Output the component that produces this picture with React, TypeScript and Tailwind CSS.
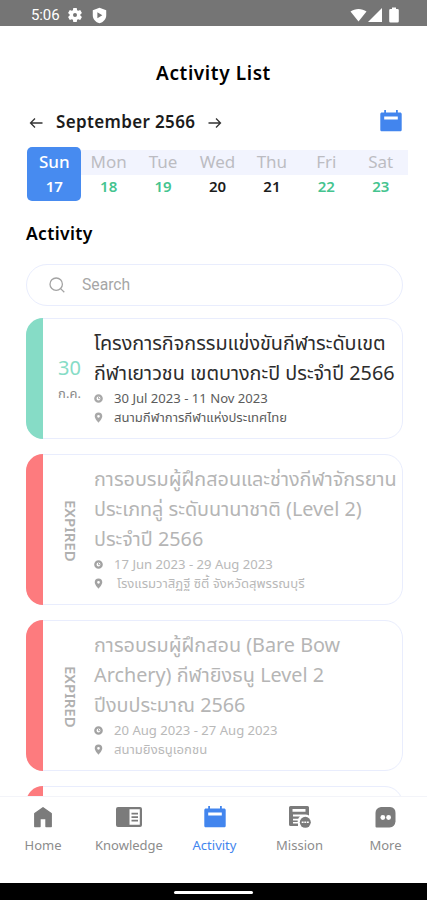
import type { ReactNode } from "react"

type Activity = {
  title: string[]
  date: string
  place: string
  placeStyle?: string
  height: string
  expired?: boolean
}

const days = [
  { name: "Sun", date: "17", color: "text-white" },
  { name: "Mon", date: "18", color: "text-[#45c48f]" },
  { name: "Tue", date: "19", color: "text-[#45c48f]" },
  { name: "Wed", date: "20", color: "text-[#1c1c1c]" },
  { name: "Thu", date: "21", color: "text-[#1c1c1c]" },
  { name: "Fri", date: "22", color: "text-[#45c48f]" },
  { name: "Sat", date: "23", color: "text-[#45c48f]" },
]

const activities: Activity[] = [
  {
    title: ["โครงการกิจกรรมแข่งขันกีฬาระดับเขต", "กีฬาเยาวชน เขตบางกะปิ ประจำปี 2566"],
    date: "30 Jul 2023 - 11 Nov 2023",
    place: "สนามกีฬาการกีฬาแห่งประเทศไทย",
    height: "h-[121px]",
  },
  {
    title: ["การอบรมผู้ฝึกสอนและช่างกีฬาจักรยาน", "ประเภทลู่ ระดับนานาชาติ (Level 2)", "ประจำปี 2566"],
    date: "17 Jun 2023 - 29 Aug 2023",
    place: "โรงแรมวาสิฏฐี ซิตี้ จังหวัดสุพรรณบุรี",
    placeStyle: "pl-[3px]",
    height: "h-[151px]",
    expired: true,
  },
  {
    title: ["การอบรมผู้ฝึกสอน (Bare Bow", "Archery) กีฬายิงธนู Level 2", "ปีงบประมาณ 2566"],
    date: "20 Aug 2023 - 27 Aug 2023",
    place: "สนามยิงธนูเอกชน",
    height: "h-[151px]",
    expired: true,
  },
]

function CalendarIcon({ className }: { className: string }) {
  return (
    <svg viewBox="0 0 24 24" className={className} fill="currentColor">
      <path d="M5.200 1h1.800v2.400h10V1h1.800v2.400h2.200c1 0 1.700.7 1.700 1.600v15.700c0 .9-.7 1.600-1.700 1.600H3c-1 0-1.700-.7-1.700-1.600V5c0-.9.7-1.600 1.700-1.600h2.200V1zM5.200 7.400v3h13.600v-3H5.200z" fillRule="evenodd" />
    </svg>
  )
}

function StatusBar() {
  return (
    <div className="h-[26px] shrink-0 bg-[#757575] text-white flex items-center justify-between pl-[31px] pr-7 pt-1">
      <div className="flex items-center">
        <span className="w-[37px] font-['Roboto',sans-serif] text-[15px] leading-5 tracking-[-0.1px]">5:06</span>
        <svg viewBox="0 0 24 24" className="w-4 h-4 -ml-px" fill="currentColor">
          <path fillRule="evenodd" d="M9.4 1.500h5.200l.5 3.300 1.800 1 2.900-1.200 2.600 4.500-2.400 2v1.800l2.400 2-2.600 4.500-2.900-1.200-1.800 1-.5 3.300H9.400l-.5-3.300-1.800-1-2.900 1.200-2.600-4.500 2.400-2v-1.800l-2.400-2 2.600-4.500 2.900 1.200 1.800-1zM12 9a3 3 0 1 0 0 6 3 3 0 0 0 0-6z" />
        </svg>
        <svg viewBox="0 0 24 24" className="w-[17px] h-[17px] ml-2" fill="currentColor">
          <path fillRule="evenodd" d="M12 1l9.500 3.500v7c0 5.500-4 9.700-9.500 11.500-5.500-1.800-9.500-6-9.500-11.500v-7zM9 7.500v8.500l7-4.250z" />
        </svg>
      </div>
      <div className="flex items-center">
        <svg viewBox="0 0 17 14" className="w-[17px] h-[14px]" fill="currentColor">
          <path d="M0.500 3.500C5 0 12 0 16.500 3.500L8.500 13.500z" />
        </svg>
        <svg viewBox="0 0 14 14" className="w-[14px] h-[14px] ml-px" fill="currentColor">
          <path d="M14 0v14H0z" />
        </svg>
        <svg viewBox="0 0 10 16" className="w-[10px] h-[16px] ml-[7px]" fill="currentColor">
          <path d="M3 0.500h4V2h1.500q1.300 0 1.300 1.300v10.900q0 1.300-1.300 1.300h-7q-1.300 0-1.300-1.300V3.300Q.2 2 1.500 2H3z" />
        </svg>
      </div>
    </div>
  )
}

function Arrow({ className }: { className: string }) {
  return (
    <svg viewBox="0 0 14 12" className={className} fill="none" stroke="#333" strokeWidth="1.300">
      <path d="M13.500 6H1.500M6 1.500L1.500 6L6 10.500" />
    </svg>
  )
}

function Month() {
  return (
    <div className="h-[30px] mt-[18px] px-[27px] flex items-center">
      <Arrow className="w-[14px] h-3 ml-[2px] mt-[3px]" />
      <h2 className="w-[152px] ml-[13px] mt-px whitespace-nowrap text-[17px] font-semibold text-[#1c1c1c] tracking-[0.35px]">September 2566</h2>
      <Arrow className="w-[14px] h-3 mt-[3px] rotate-180" />
      <CalendarIcon className="w-6 h-6 ml-auto mr-[-3px] text-[#4285ee]" />
    </div>
  )
}

function Week() {
  return (
    <div className="ml-[27px] w-[381px] h-[54px] mt-[11px] flex">
      {days.map((day, i) => (
        <div
          key={day.name}
          className={`flex-1 h-[54px] text-center ${i === 0 ? "bg-[#478bf0] rounded-[5px]" : ""}`}
        >
          <div className={`h-[25px] mt-[3px] text-[17px] leading-[24px] ${i === 0 ? "text-white font-medium" : "text-[#bcbcc2] bg-[#f2f4fe]"}`}>
            {day.name}
          </div>
          <div className={`text-[15px] leading-[22px] font-semibold ${day.color}`}>{day.date}</div>
        </div>
      ))}
    </div>
  )
}

function Meta({ icon, text, expired, style = "" }: { icon: ReactNode; text: string; expired?: boolean; style?: string }) {
  return (
    <div className="h-[19px] flex items-center">
      <span className={`w-[20px] ${expired ? "text-[#a2a2a2]" : "text-[#a8a8a8]"}`}>{icon}</span>
      <span className={`whitespace-nowrap text-[13.1px] leading-[19px] ${expired ? "text-[#b9b9b9]" : "text-[#5c5c5c]"} ${style}`}>
        {text}
      </span>
    </div>
  )
}

function Card({ activity }: { activity: Activity }) {
  const { title, date, place, placeStyle, height, expired } = activity

  return (
    <div className={`${height} shrink-0 flex rounded-[18px] border border-[#e9edfd]`}>
      <div className={`w-[17px] -my-px -ml-px shrink-0 rounded-l-[17px] ${expired ? "bg-[#fd7b7e]" : "bg-[#86dcc6]"}`} />

      {/* LEFT LABEL */}
      <div className="w-[51px] shrink-0 flex flex-col items-center justify-center">
        {expired ? (
          <span className="[writing-mode:vertical-rl] text-[15px] leading-5 font-semibold text-[#b0b0b0] ml-[5px] mt-[3px]">EXPIRED</span>
        ) : (
          <>
            <span className="mt-[3px] ml-[2px] text-[20px] leading-[26px] text-[#86dcc6]">30</span>
            <span className="ml-[2px] text-[13px] leading-[24px] text-[#8a8a8a]">ก.ค.</span>
          </>
        )}
      </div>

      <div className="pt-[9px]">
        {title.map((line) => (
          <div key={line} className="h-[30px]">
            <span className={`whitespace-nowrap text-[19.8px] leading-[30px] ${expired ? "text-[#b5b5b5]" : "text-[#2c2c2c]"}`}>
              {line}
            </span>
          </div>
        ))}
        <div className="pt-px">
          <Meta
            expired={expired}
            text={date}
            icon={
              <svg viewBox="0 0 10 10" className="w-[9px] h-[9px]" fill="none">
                <circle cx="5" cy="5" r="3.500" stroke="currentColor" strokeWidth="2.600" />
                <path d="M5 3.200V5.200H6.800" stroke="currentColor" />
              </svg>
            }
          />
          <Meta
            expired={expired}
            text={place}
            style={placeStyle}
            icon={
              <svg viewBox="0 0 10 12" className="w-[9px] h-[11px]" fill="currentColor">
                <path fillRule="evenodd" d="M5 .5a4.200 4.200 0 0 0-4.200 4.200C.8 7.500 5 11.800 5 11.800s4.200-4.300 4.200-7.100A4.200 4.200 0 0 0 5 .5zm0 2.700a1.500 1.500 0 1 1 0 3 1.500 1.500 0 0 1 0-3z" />
              </svg>
            }
          />
        </div>
      </div>
    </div>
  )
}

function NavItem({ label, active, width, children }: { label: string; active?: boolean; width: string; children: ReactNode }) {
  return (
    <div className={`${width} shrink-0 flex flex-col items-center ${active ? "text-[#4285ee]" : "text-[#7b7b7b]"}`}>
      <div className="h-6 flex items-center">{children}</div>
      <span className={`mt-[6px] text-[13px] leading-5 ${active ? "" : "text-[#8c8c8c]"}`}>{label}</span>
    </div>
  )
}

function BottomNav() {
  return (
    <div className="h-[87px] shrink-0 border-t border-[#f3f4f9] bg-white flex pt-2">
      <NavItem label="Home" width="w-[86px]">
        <svg viewBox="0 0 20 22" className="w-5 h-[22px]" fill="currentColor">
          <path d="M10 1.700L1.800 7.500v13h5.200V12.500h6v8h5.200v-13z" stroke="currentColor" strokeLinejoin="round" strokeWidth="1.400" />
        </svg>
      </NavItem>
      <NavItem label="Knowledge" width="w-[86px]">
        <svg viewBox="0 0 26 20" className="w-[26px] h-5" fill="currentColor">
          <path fillRule="evenodd" d="M2 0h22q2 0 2 2v16q0 2-2 2H2q-2 0-2-2V2Q0 0 2 0zM13.500 2.200v15.600h10.300V2.200zM15.500 5.700H22v1.800h-6.500zm0 3.500H22V11h-6.500zm0 3.500H22v1.800h-6.500z" />
        </svg>
      </NavItem>
      <NavItem label="Activity" width="w-[85px]" active>
        <CalendarIcon className="w-6 h-6" />
      </NavItem>
      <NavItem label="Mission" width="w-[85px]">
        <svg viewBox="0 0 22 22" className="w-[22px] h-[22px]" fill="currentColor">
          <path fillRule="evenodd" d="M1.500 0h17q1.500 0 1.500 1.500V9.500a8 8 0 0 0-3.500-1H4V10.500h7q-1.300 1-1.800 2.200H4v1.800h4.700v1.500H4v1.500h5v2.500H1.500Q0 20 0 18.500v-17Q0 0 1.500 0zM3.500 3v2.800h13V3z" />
          <circle cx="16.300" cy="16.300" r="5.500" />
          <path d="M12.700 16.300h7.200" stroke="#fff" strokeWidth="1.500" strokeDasharray="1.900 .7" />
        </svg>
      </NavItem>
      <NavItem label="More" width="w-[87px]">
        <svg viewBox="0 0 21 21" className="w-[21px] h-[21px]" fill="currentColor">
          <path d="M6 0h9q5.500 .5 5.500 6v8.500q-.5 5.500-6 6H1.500Q.5 20.500 .5 19.500V6Q.5 1 6 0z" />
          <circle cx="7.800" cy="10.500" r="2.400" fill="#fff" />
          <circle cx="13.600" cy="10.500" r="2.400" fill="#fff" />
        </svg>
      </NavItem>
    </div>
  )
}

export default function App() {
  return (
    <div className="w-[427px] h-[900px] overflow-hidden bg-white flex flex-col font-['Noto_Sans','Noto_Sans_Thai',sans-serif]">
      <StatusBar />

      <h1 className="mt-[32px] text-center text-[19px] leading-[30px] font-semibold text-black tracking-[0.6px]">Activity List</h1>
      <Month />
      <Week />

      <h3 className="mt-[17px] ml-[26px] text-[17.5px] leading-[30px] font-semibold text-black tracking-[0.35px]">Activity</h3>

      {/* SEARCH */}
      <div className="mt-[16px] mx-[26px] w-[377px] h-[42px] shrink-0 rounded-full border border-[#e9edfd] flex items-center pl-[22px]">
        <svg viewBox="0 0 16 16" className="w-4 h-4" fill="none" stroke="#a3a3a3" strokeWidth="1.300">
          <circle cx="7.200" cy="7.200" r="6.200" />
          <path d="M11.600 11.600L15.300 15.300" />
        </svg>
        <span className="ml-[17px] font-['Roboto',sans-serif] text-[15.7px] leading-5 text-[#a6a6a6]">Search</span>
      </div>

      {/* ACTIVITY CARDS */}
      <div className="flex-1 min-h-0 overflow-hidden mt-3 ml-[26px] w-[377px] flex flex-col gap-[15px]">
        {activities.map((activity) => (
          <Card key={activity.date} activity={activity} />
        ))}
        <div className="h-[151px] shrink-0 flex rounded-[18px] border border-[#e9edfd]">
          <div className="w-[17px] -my-px -ml-px rounded-l-[17px] bg-[#fd7b7e]" />
        </div>
      </div>

      <BottomNav />

      <div className="h-[17px] shrink-0 bg-black flex justify-center">
        <div className="mt-2 w-[79px] h-[3px] rounded-full bg-white" />
      </div>
    </div>
  )
}
